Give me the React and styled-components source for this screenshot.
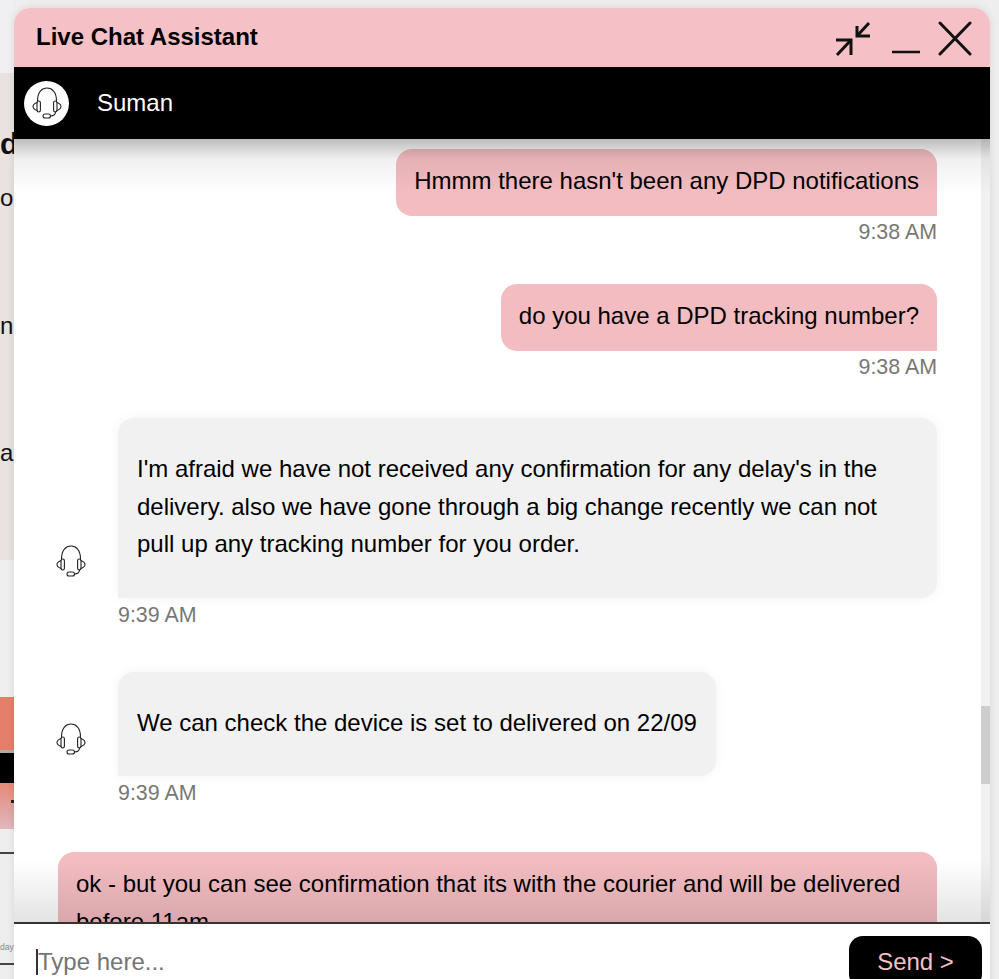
import React from "react";
import styled, { createGlobalStyle } from "styled-components";

const GlobalStyle = createGlobalStyle`
  * {
    box-sizing: border-box;
  }

  html, body {
    margin: 0;
    height: 979px;
    overflow: hidden;
    background: #eeeeee;
    font-family: "Liberation Sans", Arial, sans-serif;
  }
`;

const Page = styled.div`
  position: relative;
  width: 999px;
  height: 979px;
  overflow: hidden;
`;

/* what is left visible of the shop page behind the chat window */
const SideStrip = styled.div`
  width: 14px;
  height: 979px;
  display: flex;
  flex-direction: column;
  overflow: hidden;
`;

const Band = styled.div`
  flex: none;
  height: ${(props) => props.h}px;
  background: ${(props) => props.bg || "#eeeeee"};
  overflow: hidden;
`;

const Letter = styled.div`
  height: 127.5px;
  font-size: 24px;
  line-height: 30px;
  color: #111;
  white-space: nowrap;
`;

const BoldLetter = styled(Letter)`
  height: 54px;
  font-size: 30px;
  font-weight: 700;
`;

const LetterColumn = styled.div`
  padding-top: 56px;
`;

const Dot = styled.div`
  width: 3px;
  height: 3px;
  margin: 17px 0 0 11px;
  background: #222;
`;

const DayLabel = styled.div`
  font-size: 8.5px;
  line-height: 12px;
  padding-top: 87px;
  color: #888;
  white-space: nowrap;
`;

const ChatWindow = styled.div`
  position: absolute;
  top: 8px;
  left: 14px;
  width: 976px;
  height: 990px;
  display: flex;
  flex-direction: column;
  background: #fff;
  border-radius: 16px 16px 0 0;
  box-shadow: 0 0 8px rgba(0, 0, 0, 0.1);
  overflow: hidden;
`;

const Header = styled.div`
  flex: none;
  height: 59px;
  display: flex;
  align-items: center;
  justify-content: space-between;
  padding: 0 18px 2px 22px;
  background: #f5c1c6;
`;

const Title = styled.div`
  font-size: 24px;
  font-weight: 700;
  color: #000;
`;

const WindowIcons = styled.div`
  display: flex;
  align-items: center;
  gap: 18px;
  padding-top: 5px;
`;

const ArrowsSvg = styled.svg`
  margin-right: 3px;
`;

const AgentBar = styled.div`
  flex: none;
  height: 72px;
  display: flex;
  align-items: center;
  gap: 28px;
  padding-left: 10px;
  background: #000;
`;

const Avatar = styled.div`
  width: 45px;
  height: 45px;
  border-radius: 50%;
  background: #fff;
  display: flex;
  align-items: center;
  justify-content: center;
`;

const AgentName = styled.div`
  font-size: 24px;
  color: #fff;
`;

const ChatBody = styled.div`
  position: relative;
  flex: none;
  height: 783px;
  display: flex;
  overflow: hidden;

  &::after {
    content: "";
    position: absolute;
    inset: 0;
    pointer-events: none;
    background:
      linear-gradient(rgba(0, 0, 0, 0.26), rgba(0, 0, 0, 0.06) 20px, rgba(0, 0, 0, 0) 55px),
      linear-gradient(0deg, rgba(0, 0, 0, 0.11), rgba(0, 0, 0, 0) 62px);
  }
`;

const Messages = styled.div`
  flex: 1;
  min-width: 0;
  padding: 10px 44px 0;
  display: flex;
  flex-direction: column;
`;

const ScrollTrack = styled.div`
  flex: none;
  width: 9px;
  padding-top: 567px;
  background: #f1f1f1;
`;

const ScrollThumb = styled.div`
  height: 78px;
  background: #cdcdcd;
`;

const Outgoing = styled.div`
  display: flex;
  flex-direction: column;
  align-items: flex-end;
  margin-bottom: ${(props) => props.after}px;
`;

const Incoming = styled.div`
  display: flex;
  flex-direction: column;
  align-items: flex-start;
  margin-bottom: ${(props) => props.after}px;
`;

const BubbleRow = styled.div`
  display: flex;
  align-items: flex-end;
  gap: 32px;
  margin-left: -2px;
`;

const AgentIcon = styled.div`
  flex: none;
  width: 30px;
  height: 32px;
  margin-bottom: 21px;
`;

const OutBubble = styled.div`
  padding: 13px 18px 16.5px;
  font-size: 24px;
  line-height: 37.5px;
  color: #000;
  background: #f3bcc1;
  border-radius: 16px 16px 0 16px;
`;

const InBubble = styled.div`
  padding: 32px 17px 35px 19px;
  width: ${(props) => props.w}px;
  font-size: 24px;
  line-height: 37.5px;
  color: #000;
  background: #f1f1f1;
  border-radius: 16px 16px 16px 0;
  box-shadow: 0 0 12px rgba(0, 0, 0, 0.05);
`;

const Time = styled.div`
  margin-top: ${(props) => (props.agent ? "2px" : "1px")};
  margin-left: ${(props) => (props.agent ? "60px" : "0")};
  font-size: 21.4px;
  line-height: 31px;
  color: #777;
`;

const Footer = styled.div`
  flex: none;
  height: 148px;
  display: flex;
  align-items: flex-start;
  justify-content: space-between;
  padding: 12px 8px 0 22px;
  border-top: 2px solid #333;
  background: #fff;
`;

const MessageInput = styled.input`
  width: 780px;
  height: 26px;
  margin-top: 13px;
  padding: 0;
  border: none;
  border-left: 2px solid #333;
  outline: none;
  background: transparent;
  font-family: inherit;
  font-size: 24px;
  color: #111;

  &::placeholder {
    color: #757575;
    opacity: 1;
  }
`;

const SendButton = styled.button`
  width: 133px;
  height: 52px;
  border: none;
  border-radius: 14px;
  background: #000;
  color: #f5c1c6;
  font-family: inherit;
  font-size: 24px;
  padding: 0 0 1px;
`;

const HeadsetIcon = ({ size = 30 }) => (
  <svg width={size} height={size * 1.07} viewBox="0 0 30 32" fill="none" stroke="#222" strokeWidth="1.1" strokeLinecap="round" strokeLinejoin="round">
    <path d="M5.5 14 C5.5 5 10 1 15 1 C20 1 24.5 5 24.5 14" />
    <rect x="5" y="14" width="3.4" height="11" rx="1.7" />
    <rect x="21.6" y="14" width="3.4" height="11" rx="1.7" />
    <path d="M5 15.5 C2.6 16.4 1 18 1 19.5 C1 21 2.6 22.6 5 23.5" />
    <path d="M25 15.5 C27.4 16.4 29 18 29 19.5 C29 21 27.4 22.6 25 23.5" />
    <path d="M23.5 25 C23.5 27.6 21.5 28.8 18.5 29" />
    <rect x="11" y="27" width="7.5" height="4" rx="2" />
  </svg>
);

const MinimizeArrowsIcon = () => (
  <ArrowsSvg width="36" height="36" viewBox="0 0 36 36" fill="none" stroke="#111" strokeWidth="3">
    <path d="M34 2 L22 15" />
    <path d="M22 5 V15 H35" />
    <path d="M16 19 L2 34" />
    <path d="M1 19 H16 V34" />
  </ArrowsSvg>
);

const MinusIcon = () => (
  <svg width="28" height="36" viewBox="0 0 28 36" fill="none" stroke="#111" strokeWidth="2.6">
    <path d="M0 31 H28" />
  </svg>
);

const CloseIcon = () => (
  <svg width="34" height="36" viewBox="0 0 34 36" fill="none" stroke="#111" strokeWidth="3" strokeLinecap="round">
    <path d="M2 2 L32 33" />
    <path d="M32 2 L2 33" />
  </svg>
);

const App = () => {
  return (
    <Page>
      <GlobalStyle />
      <SideStrip>
        <Band h={73} bg="#f0f0f2" />
        <Band h={487} bg="#e8e2e0">
          <LetterColumn>
            <BoldLetter>d</BoldLetter>
            <Letter>o</Letter>
            <Letter>n</Letter>
            <Letter>a</Letter>
          </LetterColumn>
        </Band>
        <Band h={137} bg="#efeff0" />
        <Band h={53} bg="#e4806a" />
        <Band h={3} bg="#b5aaa6" />
        <Band h={30} bg="#000" />
        <Band h={46} bg="linear-gradient(#e58a78, #e0b8c0)">
          <Dot />
        </Band>
        <Band h={23} bg="#eeeeee" />
        <Band h={2} bg="#444" />
        <Band h={109}>
          <DayLabel>day</DayLabel>
        </Band>
        <Band h={2} bg="#444" />
        <Band h={14} />
      </SideStrip>

      <ChatWindow>
        <Header>
          <Title>Live Chat Assistant</Title>
          <WindowIcons>
            <MinimizeArrowsIcon />
            <MinusIcon />
            <CloseIcon />
          </WindowIcons>
        </Header>
        <AgentBar>
          <Avatar>
            <HeadsetIcon size={30} />
          </Avatar>
          <AgentName>Suman</AgentName>
        </AgentBar>
        <ChatBody>
          <Messages>
            <Outgoing after={36}>
              <OutBubble>Hmmm there hasn't been any DPD notifications</OutBubble>
              <Time>9:38 AM</Time>
            </Outgoing>
            <Outgoing after={35}>
              <OutBubble>do you have a DPD tracking number?</OutBubble>
              <Time>9:38 AM</Time>
            </Outgoing>
            <Incoming after={41}>
              <BubbleRow>
                <AgentIcon>
                  <HeadsetIcon />
                </AgentIcon>
                <InBubble w={819}>
                  I'm afraid we have not received any confirmation for any delay's in the delivery. also we have gone through a big change recently we can not pull up any tracking number for you order.
                </InBubble>
              </BubbleRow>
              <Time agent>9:39 AM</Time>
            </Incoming>
            <Incoming after={43}>
              <BubbleRow>
                <AgentIcon>
                  <HeadsetIcon />
                </AgentIcon>
                <InBubble w={598}>We can check the device is set to delivered on 22/09</InBubble>
              </BubbleRow>
              <Time agent>9:39 AM</Time>
            </Incoming>
            <Outgoing after={0}>
              <OutBubble>ok - but you can see confirmation that its with the courier and will be delivered before 11am</OutBubble>
            </Outgoing>
          </Messages>
          <ScrollTrack>
            <ScrollThumb />
          </ScrollTrack>
        </ChatBody>
        <Footer>
          <MessageInput placeholder="Type here..." />
          <SendButton>Send &gt;</SendButton>
        </Footer>
      </ChatWindow>
    </Page>
  );
};

export default App;
